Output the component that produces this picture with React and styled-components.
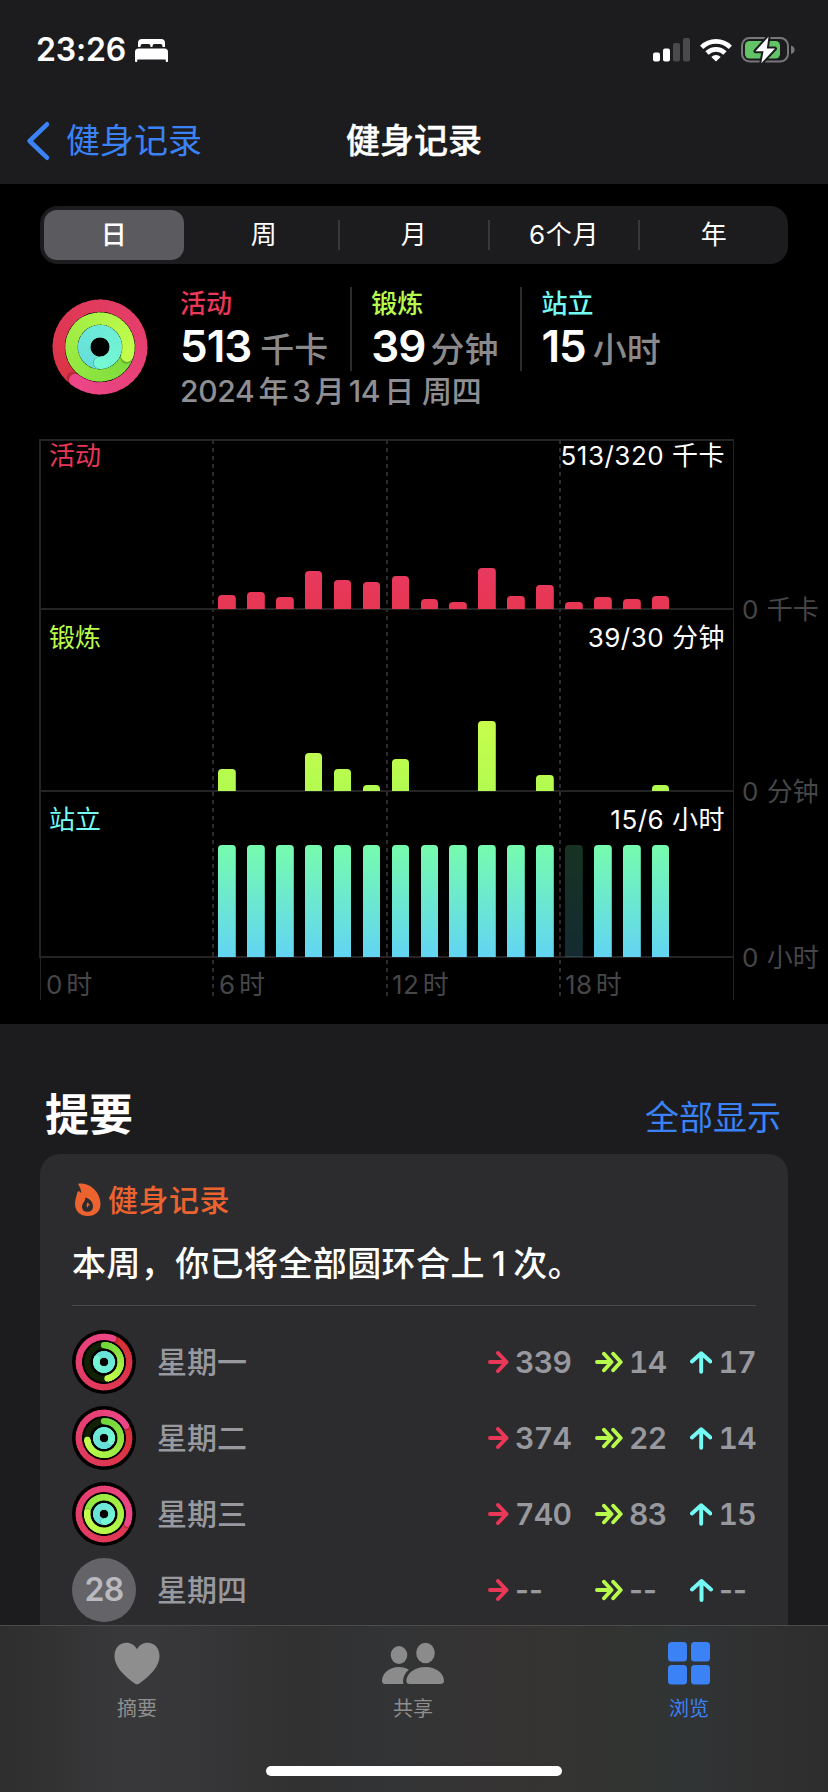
import React, { useState } from 'react';
import styled, { createGlobalStyle } from 'styled-components';

const GlobalStyle = createGlobalStyle`
  * { box-sizing: border-box; }
  body {
    margin: 0;
    background: #1c1c1e;
    color: #fff;
    font-family: Inter, "Noto Sans CJK SC", sans-serif;
    -webkit-font-smoothing: antialiased;
  }
`

const Screen = styled.div`
  width: 828px;
  height: 1792px;
  overflow: hidden;
  display: flex;
  flex-direction: column;
`
const Content = styled.main`
  flex: 1;
  min-height: 0;
  overflow: hidden;
`

/* ---------- header ---------- */
const StatusBar = styled.div`
  height: 100px;
  padding: 0 33px 0 36px;
  display: flex;
  align-items: center;
  justify-content: space-between;
`
const Clock = styled.div`
  display: flex;
  align-items: center;
  gap: 9px;
  font-size: 32px;
  line-height: 40px;
  font-weight: 600;
  letter-spacing: -0.2px;
`
const Indicators = styled.div`
  display: flex;
  align-items: center;
  gap: 9.5px;
`
const NavBar = styled.div`
  height: 84px;
  padding: 0 26px 2px;
  display: grid;
  grid-template-columns: 1fr auto 1fr;
  align-items: center;
  font-size: 34px;
  line-height: 40px;
`
const Back = styled.a`
  display: flex;
  align-items: center;
  gap: 15px;
  color: #3b82f7;
`
const Title = styled.span`
  font-weight: 500;
  -webkit-text-stroke: 0.4px #fff;
`

/* ---------- segmented control ---------- */
const Dark = styled.section`
  background: #000;
  height: 840px;
  padding-top: 22px;
`
const Segments = styled.div`
  display: flex;
  align-items: center;
  height: 58px;
  margin: 0 40px;
  padding: 4px;
  border-radius: 18px;
  background: #1c1c1e;
`
const Segment = styled.button`
  flex: 1;
  height: 50px;
  border: 0;
  border-radius: 13px;
  padding: 0;
  color: #fff;
  font-family: inherit;
  font-size: 26px;
  line-height: 50px;
  letter-spacing: 0.7px;
  font-weight: ${({ $on }) => ($on ? 500 : 400)};
  background: ${({ $on }) => ($on ? '#5b5a5f' : 'transparent')};
`
const Separator = styled.span`
  width: 2px;
  height: 30px;
  margin: 0 4px;
  background: ${({ $hidden }) => ($hidden ? 'transparent' : '#38383b')};
`

/* ---------- day summary ---------- */
const Summary = styled.div`
  display: flex;
  height: 175px;
  padding: 23px 0 0 52px;
`
const RingSlot = styled.div`
  width: 96px;
  padding-top: 12px;
  margin-right: 32px;
`
const Stats = styled.div`
  display: flex;
`
const Stat = styled.div`
  height: 84px;
  padding: 0 ${({ $last }) => ($last ? 0 : 22)}px 0 ${({ $first }) => ($first ? 0 : 19)}px;
  border-right: ${({ $last }) => ($last ? 0 : 2)}px solid #2c2c2e;
`
const StatName = styled.div`
  height: 34px;
  font-size: 26px;
  line-height: 34px;
  font-weight: 500;
  color: ${({ $color }) => $color};
`
const StatValue = styled.div`
  height: 50px;
  font-size: 44px;
  line-height: 50px;
  font-weight: 600;
  white-space: nowrap;
  letter-spacing: -1px;
`
const Unit = styled.span`
  margin-left: ${({ $gap }) => $gap}px;
  font-size: 34px;
  font-weight: 500;
  letter-spacing: 0;
  color: #8a8a8c;
`
const DateLine = styled.div`
  display: flex;
  gap: 8px;
  font-size: 30px;
  line-height: 40px;
  font-weight: 500;
  color: #8e8e93;
  white-space: nowrap;
  letter-spacing: -0.3px;
  word-spacing: -3.6px;
`

/* ---------- hourly chart ---------- */
const Chart = styled.div`
  display: flex;
  padding-left: 39px;
`
const Plot = styled.div`
  position: relative;
  width: 695px;
`
const Panels = styled.div`
  border: 2px solid #242426;
  border-width: 2px 1px 0 2px;
`
const Panel = styled.div`
  height: ${({ $height }) => $height}px;
  padding-top: ${({ $pad }) => $pad}px;
  border-bottom: 2px solid #242426;
  display: flex;
  flex-direction: column;
  justify-content: space-between;
`
const PanelHead = styled.div`
  display: flex;
  justify-content: space-between;
  padding: 0 8px;
  font-size: 26px;
  line-height: 30px;
  white-space: pre;
`
const PanelName = styled.span`
  color: ${({ $color }) => $color};
`
const PanelTotal = styled.span`
  letter-spacing: 0.5px;
`
const Bars = styled.div`
  display: grid;
  grid-template-columns: repeat(24, 1fr);
  align-items: end;
  justify-items: center;
  margin: 0 0 -1px -2px;
  position: relative;
`
const Bar = styled.span`
  width: 17.6px;
  border-radius: 4px 4px 0 0;
  background: ${({ $fill }) => $fill} bottom / 100% ${({ $span }) => $span}px;
  opacity: ${({ $dim }) => ($dim ? 0.2 : 1)};
`
// dashed hour lines, drawn over the three panels
const HourLines = styled.div`
  position: absolute;
  inset: 1px 0 0 0;
  display: grid;
  grid-template-columns: repeat(4, 1fr);
`
const HourLine = styled.span`
  width: 2px;
  margin-left: -1px;
  height: 558px;
  background: ${({ $hidden }) =>
    $hidden ? 'none' : 'repeating-linear-gradient(#2c2c2e 0 4px, transparent 4px 8px)'};
`
const Hours = styled.div`
  display: grid;
  grid-template-columns: repeat(4, 1fr);
  height: 42px;
  margin-left: 1px;
  border: 1px solid #242426;
  border-width: 0 1px;
  font-size: 26px;
  line-height: 54px;
  color: #464649;
`
const Hour = styled.span`
  padding-left: 5px;
  letter-spacing: 0.3px;
  word-spacing: -4px;
`
const Axis = styled.div`
  padding-left: 8px;
  font-size: 26px;
  line-height: 30px;
  color: #464649;
  white-space: nowrap;
`
const AxisLabel = styled.div`
  padding-top: ${({ $top }) => $top}px;
  word-spacing: 1px;
`

/* ---------- highlights ---------- */
const SectionHead = styled.div`
  height: 130px;
  padding: 69px 47px 0 45px;
  display: flex;
  justify-content: space-between;
`
const Heading = styled.h2`
  margin: 0;
  font-size: 44px;
  line-height: 44px;
  font-weight: 600;
`
const ShowAll = styled.a`
  font-size: 34px;
  line-height: 50px;
  color: #3b82f7;
`
const Card = styled.section`
  height: 600px;
  margin: 0 40px;
  padding: 26px 32px 0;
  border-radius: 20px;
  background: #2c2c2e;
`
const CardTag = styled.div`
  display: flex;
  align-items: center;
  gap: 6px;
  height: 40px;
  font-size: 30px;
  line-height: 40px;
  letter-spacing: 0.5px;
  font-weight: 500;
  color: #ec6330;
`
const CardText = styled.p`
  margin: 0 0 18px;
  padding: 23px 0 20px;
  font-size: 34px;
  line-height: 42px;
  letter-spacing: 0.4px;
  font-weight: 500;
  border-bottom: 1px solid #48484a;
  white-space: nowrap;
`
const Count = styled.span`
  margin: 0 7px;
`
const Day = styled.div`
  display: flex;
  align-items: center;
  height: 76px;
  font-size: 30px;
  line-height: 40px;
  font-weight: 500;
  color: #98989f;
`
const DayName = styled.span`
  flex: 1;
  margin-left: 21px;
`
const Badge = styled.span`
  width: 64px;
  height: 64px;
  border-radius: 50%;
  display: grid;
  place-items: center;
  background: #646368;
  color: #b9b9be;
  font-size: 32px;
  font-weight: 600;
  letter-spacing: -0.6px;
`
const Metric = styled.span`
  display: flex;
  align-items: center;
  gap: 6px;
  width: ${({ $width }) => $width}px;
  font-weight: 600;
  white-space: nowrap;
  letter-spacing: ${({ $empty }) => ($empty ? 0 : -0.6)}px;
  font-variant-numeric: ${({ $empty }) => ($empty ? 'normal' : 'tabular-nums')};
`

/* ---------- tab bar ---------- */
const TabBar = styled.nav`
  height: 167px;
  border-top: 1px solid #4b4b4c;
  background: linear-gradient(90deg, #2e2e2e 0, #38383a 115px, #38383a 160px, #313132 300px,
    #333435 400px, #363333 500px, #333431 590px, #313435 690px, #303030 770px, #2d2d2d 828px);
  display: flex;
  flex-direction: column;
  align-items: center;
`
const Tabs = styled.div`
  width: 828px;
  height: 140px;
  display: grid;
  grid-template-columns: repeat(3, 1fr);
`
const Tab = styled.a`
  display: flex;
  flex-direction: column;
  align-items: center;
  padding: 16px 2px 0 0;
  font-size: 20px;
  line-height: 26px;
  color: ${({ $on }) => ($on ? '#3b82f7' : '#8e8e8e')};
  svg { margin-bottom: 11px; }
`
const HomeIndicator = styled.div`
  width: 296px;
  height: 10px;
  border-radius: 5px;
  background: #fff;
`

/* ---------- icons ---------- */
const BedIcon = () => (
  <svg width="33" height="23" viewBox="0 0 33 23" fill="#fff">
    <path d="M3 8V4a4 4 0 0 1 4-4h19a4 4 0 0 1 4 4v4h-2.500V7a2 2 0 0 0-2-2H19.500a2 2 0 0 0-2 2v1h-2V7a2 2 0 0 0-2-2H7.500a2 2 0 0 0-2 2v1z" />
    <path d="M0 13a3.500 3.500 0 0 1 3.500-3.500h26A3.500 3.500 0 0 1 33 13v9a1 1 0 0 1-2.300 0v-1.500H2.300V22A1 1 0 0 1 0 22z" />
  </svg>
)
const SignalIcon = () => (
  <svg width="37" height="24" viewBox="0 0 37 24">
    <rect x="0" y="14.500" width="7" height="9" rx="2" fill="#fff" />
    <rect x="10" y="10.500" width="7" height="13" rx="2" fill="#fff" />
    <rect x="20" y="5" width="7" height="18.500" rx="2" fill="#4a4a4c" />
    <rect x="30" y="0" width="7" height="23.500" rx="2" fill="#4a4a4c" />
  </svg>
)
const WifiIcon = () => (
  <svg width="32" height="24" viewBox="0 0 32 24" fill="none" stroke="#fff" strokeWidth="4.600">
    <path d="M1.700 9.300a20.300 20.300 0 0 1 28.600 0" />
    <path d="M7 15a13 13 0 0 1 18 0" />
    <path d="M16 23.500l-4.700-4.600a6.800 6.800 0 0 1 9.400 0z" fill="#fff" stroke="none" />
  </svg>
)
const BatteryIcon = () => (
  <svg width="54" height="28" viewBox="0 0 54 28">
    <rect x="1" y="2" width="46" height="23.500" rx="7.500" fill="none" stroke="#77777a" strokeWidth="2" />
    <rect x="4" y="5" width="35" height="17.500" rx="4.500" fill="#62c466" />
    <path d="M50 9.500c2.600.800 3.600 2.200 3.600 4.300s-1 3.500-3.600 4.300z" fill="#77777a" />
    <path d="M27.500.800L14.500 15.200h8l-2.200 12L34 12.600h-8.200z" fill="#fff" stroke="#1c1c1e" strokeWidth="4" strokeLinejoin="round" paintOrder="stroke" />
  </svg>
)
const ChevronIcon = () => (
  <svg width="25" height="40" viewBox="0 0 25 40" fill="none" stroke="#3b82f7" strokeWidth="4.600" strokeLinecap="round" strokeLinejoin="round">
    <path d="M21 3.300L3.600 20 21 36.700" />
  </svg>
)
const FlameIcon = () => (
  <svg width="30" height="34" viewBox="0 0 30 34">
    <path
      fill="#ec6330"
      fillRule="evenodd"
      d="M6.400 1.700C6 .700 6.700.500 7.700.400 18 0 28.500 8.500 28.500 21c0 7.200-5 12-12.700 12C8 33 3 28 3 20.700c0-4.500 1.500-7.500 2.200-10.800.4-1.700 1.800-2 3-.8.400.4.700.9 1.100 1.200C9.200 7 8 4.200 6.400 1.700zM13.300 14.600c.4 4-3.300 5.500-3.300 9.200 0 3 2.200 5 5.400 5 3.300 0 5.600-2.100 5.600-5.400 0-4-2.900-7.800-7.700-8.800zM15.300 19.500c1.600.8 2.500 2 2.400 3.500-.5-.2-.9-.6-1.200-1 0 1-.4 1.800-1.300 2.500-.8-1.300-.8-3 .1-5z"
    />
  </svg>
)
const MoveArrow = () => (
  <svg width="21" height="24" viewBox="0 0 21 24" fill="none" stroke="#e93757" strokeWidth="4" strokeLinecap="round" strokeLinejoin="round">
    <path d="M2 12h16.500M10 3l8.500 9-8.500 9" />
  </svg>
)
const ExerciseArrow = () => (
  <svg width="28" height="24" viewBox="0 0 28 24" fill="none" stroke="#b9fb4c" strokeWidth="3.900" strokeLinecap="round" strokeLinejoin="round">
    <path d="M2 12h14M9 3.800l7.500 8.200L9 20.200M18.200 3.800l7.500 8.200-7.500 8.200" />
  </svg>
)
const StandArrow = () => (
  <svg width="23" height="24" viewBox="0 0 23 24" fill="none" stroke="#73fbf4" strokeWidth="4" strokeLinecap="round" strokeLinejoin="round">
    <path d="M11.500 22V3.500M2 11.500l9.500-8.500 9.500 8.500" />
  </svg>
)
const HeartIcon = () => (
  <svg width="46" height="43" viewBox="0 0 46 43" fill="#8e8e8e">
    <path d="M23 42.500c-1 0-2-.8-3.600-2C9.500 33 .5 24.600.500 14 .500 6 5.700.800 12.500.800c4.500 0 8.200 2.400 10.500 6.400C25.300 3.200 29 .800 33.500.800 40.300.800 45.500 6 45.500 14c0 10.600-9 19-18.900 26.500-1.600 1.200-2.600 2-3.600 2z" />
  </svg>
)
const PeopleIcon = () => (
  <svg width="62" height="43" viewBox="0 0 62 43" fill="#8b8b8b">
    <ellipse cx="17" cy="13" rx="8.300" ry="9" />
    <ellipse cx="43.500" cy="11" rx="9.300" ry="10.300" />
    <path d="M3 42C1 42 0 41 0 39c0-7.500 7-14 16.800-14 4 0 7.300 1 10 2.800C23 31 21 35.500 21 39.500c0 1 .2 1.800.6 2.500z" />
    <path d="M28 42c-2.500 0-3.700-1-3.700-3 0-6.800 7.400-14 19.200-14S62 32.200 62 39c0 2-1.200 3-3.700 3z" />
  </svg>
)
const GridIcon = () => (
  <svg width="42" height="43" viewBox="0 0 42 43" fill="#3b82f7">
    <rect x="0" y="0" width="19" height="19.500" rx="3.500" />
    <rect x="23" y="0" width="19" height="19.500" rx="3.500" />
    <rect x="0" y="23" width="19" height="19.500" rx="3.500" />
    <rect x="23" y="23" width="19" height="19.500" rx="3.500" />
  </svg>
)

/* ---------- activity rings ---------- */
const RING_COLORS = [
  { from: [214, 46, 48], to: [236, 70, 137], track: '#2b0a10' },
  { from: [112, 214, 58], to: [196, 254, 76], track: '#112204' },
  { from: [92, 205, 222], to: [117, 248, 212], track: '#06282a' },
]
const STEPS = 48

const mix = (a, b, t) => `rgb(${a.map((v, i) => Math.round(v + (b[i] - v) * t)).join(',')})`
const point = (c, r, deg) => {
  const rad = ((deg - 90) * Math.PI) / 180
  return [c + r * Math.cos(rad), c + r * Math.sin(rad)]
}

const Ring = ({ c, r, width, value, colors }) => {
  const end = value * 360
  const start = Math.max(0, end - 360)
  const sweep = end - start
  const first = start / end * 0.6
  // every slice runs under the next one so that no seam shows
  const overlap = (2 / (r - width / 2)) * (180 / Math.PI)
  const arcs = []
  for (let i = 0; i < STEPS; i++) {
    const a = start + (sweep * i) / STEPS
    const b = start + (sweep * (i + 1)) / STEPS
    const [x1, y1] = point(c, r, a)
    const [x2, y2] = point(c, r, Math.min(b + overlap, end))
    const t = first + (1 - first) * (i / (STEPS - 1))
    arcs.push(
      <path key={i} d={`M${x1} ${y1}A${r} ${r} 0 0 1 ${x2} ${y2}`} stroke={mix(colors.from, colors.to, t)} strokeWidth={width} />
    )
  }
  const [sx, sy] = point(c, r, start)
  const [ex, ey] = point(c, r, end)
  const [hx, hy] = point(c, r, end + 5)
  return (
    <g fill="none">
      {value < 1 && <circle cx={c} cy={c} r={r} stroke={colors.track} strokeWidth={width} />}
      {value < 1 && <circle cx={sx} cy={sy} r={width / 2} fill={mix(colors.from, colors.to, 0)} />}
      {arcs}
      {value > 1 && <circle cx={hx} cy={hy} r={width / 2 - 0.3} fill="rgba(0,0,0,0.18)" />}
      <circle cx={ex} cy={ey} r={width / 2} fill={mix(colors.from, colors.to, 1)} />
    </g>
  )
}

const Rings = ({ size, radii, width, values, backed }) => (
  <svg width={size} height={size} viewBox={`0 0 ${size} ${size}`}>
    {backed && <circle cx={size / 2} cy={size / 2} r={size / 2} fill="#000" />}
    {values.map((value, i) => (
      <Ring key={i} c={size / 2} r={radii[i]} width={width} value={value} colors={RING_COLORS[i]} />
    ))}
  </svg>
)

/* ---------- data ---------- */
const RED = '#e93757'
const GREEN = '#b9fb4c'
const CYAN = '#73fbf4'

const ranges = ['日', '周', '月', '6个月', '年']

const stats = [
  { name: '活动', color: RED, value: 513, unit: '千卡', gap: 9 },
  { name: '锻炼', color: GREEN, value: 39, unit: '分钟', gap: 5 },
  { name: '站立', color: CYAN, value: 15, unit: '小时', gap: 7 },
]

const panels = [
  {
    name: '活动', color: RED, total: '513/320 千卡', height: 169, pad: 0,
    fill: 'linear-gradient(#ea4078, #e63652)', span: 110,
    bars: { 6: 14, 7: 17, 8: 12, 9: 38, 10: 29, 11: 27, 12: 33, 13: 10, 14: 7, 15: 41, 16: 13, 17: 24, 18: 7, 19: 12, 20: 10, 21: 13 },
  },
  {
    name: '锻炼', color: GREEN, total: '39/30 分钟', height: 182, pad: 13,
    fill: 'linear-gradient(#cbfd4c, #b2fb50)', span: 80,
    bars: { 6: 22, 9: 38, 10: 22, 11: 6, 12: 32, 15: 70, 17: 16, 21: 6 },
  },
  {
    name: '站立', color: CYAN, total: '15/6 小时', height: 166, pad: 13,
    fill: 'linear-gradient(#76fcad, #62d4f3)', span: 112,
    bars: Object.fromEntries(Array.from({ length: 16 }, (_, i) => [i + 6, 112])),
    missed: 18,
  },
]

const hours = ['0 时', '6 时', '12 时', '18 时']

const axis = [
  { label: '0 千卡', top: 156 },
  { label: '0 分钟', top: 152 },
  { label: '0 小时', top: 136 },
]

const days = [
  { name: '星期一', rings: [1.06, 0.467, 2.833], move: 339, exercise: 14, stand: 17 },
  { name: '星期二', rings: [1.169, 0.733, 2.333], move: 374, exercise: 22, stand: 14 },
  { name: '星期三', rings: [2.312, 2.767, 2.5], move: 740, exercise: 83, stand: 15 },
  { name: '星期四', date: 28, move: '--', exercise: '--', stand: '--' },
]

const tabs = [
  { name: '摘要', Icon: HeartIcon },
  { name: '共享', Icon: PeopleIcon },
  { name: '浏览', Icon: GridIcon, on: true },
]

const HourBars = ({ bars, fill, span, missed }) => (
  <Bars>
    {Array.from({ length: 24 }, (_, h) => (
      <Bar key={h} $fill={fill} $span={span} $dim={h === missed} style={{ height: bars[h] || 0 }} />
    ))}
  </Bars>
)

const App = () => {
  const [range, setRange] = useState(0)
  return (
    <Screen>
      <GlobalStyle />
      <StatusBar>
        <Clock>23:26 <BedIcon /></Clock>
        <Indicators>
          <SignalIcon />
          <WifiIcon />
          <BatteryIcon />
        </Indicators>
      </StatusBar>
      <NavBar>
        <Back><ChevronIcon />健身记录</Back>
        <Title>健身记录</Title>
      </NavBar>

      <Content>
        <Dark>
          <Segments>
            {ranges.map((name, i) => (
              <React.Fragment key={name}>
                {i > 0 && <Separator $hidden={i === range || i === range + 1} />}
                <Segment $on={i === range} onClick={() => setRange(i)}>{name}</Segment>
              </React.Fragment>
            ))}
          </Segments>

          <Summary>
            <RingSlot>
              <Rings size={96} radii={[41.3, 28.5, 15.8]} width={12.2} values={[1.603, 1.3, 2.5]} />
            </RingSlot>
            <div>
              <Stats>
                {stats.map((s, i) => (
                  <Stat key={s.name} $first={i === 0} $last={i === stats.length - 1}>
                    <StatName $color={s.color}>{s.name}</StatName>
                    <StatValue>{s.value}<Unit $gap={s.gap}>{s.unit}</Unit></StatValue>
                  </Stat>
                ))}
              </Stats>
              <DateLine>
                <span>2024 年 3 月 14 日</span>
                <span>周四</span>
              </DateLine>
            </div>
          </Summary>

          <Chart>
            <Plot>
              <HourLines>
                {hours.map((h, i) => <HourLine key={h} $hidden={i === 0} />)}
              </HourLines>
              <Panels>
                {panels.map((p) => (
                  <Panel key={p.name} $height={p.height} $pad={p.pad}>
                    <PanelHead>
                      <PanelName $color={p.color}>{p.name}</PanelName>
                      <PanelTotal>{p.total}</PanelTotal>
                    </PanelHead>
                    <HourBars {...p} />
                  </Panel>
                ))}
              </Panels>
              <Hours>
                {hours.map((h) => <Hour key={h}>{h}</Hour>)}
              </Hours>
            </Plot>
            <Axis>
              {axis.map((a) => <AxisLabel key={a.label} $top={a.top}>{a.label}</AxisLabel>)}
            </Axis>
          </Chart>
        </Dark>

        <SectionHead>
          <Heading>提要</Heading>
          <ShowAll>全部显示</ShowAll>
        </SectionHead>
        <Card>
          <CardTag><FlameIcon />健身记录</CardTag>
          <CardText>本周，你已将全部圆环合上<Count>1</Count>次。</CardText>
          {days.map((d) => (
            <Day key={d.name}>
              {d.rings
                ? <Rings backed size={64} radii={[25.200, 16.800, 7.700]} width={6.200} values={d.rings} />
                : <Badge>{d.date}</Badge>}
              <DayName>{d.name}</DayName>
              <Metric $width={107} $empty={!d.rings}><MoveArrow />{d.move}</Metric>
              <Metric $width={95} $empty={!d.rings}><ExerciseArrow />{d.exercise}</Metric>
              <Metric $width={66} $empty={!d.rings}><StandArrow />{d.stand}</Metric>
            </Day>
          ))}
        </Card>
      </Content>

      <TabBar>
        <Tabs>
          {tabs.map(({ name, Icon, on }) => (
            <Tab key={name} $on={on}><Icon />{name}</Tab>
          ))}
        </Tabs>
        <HomeIndicator />
      </TabBar>
    </Screen>
  )
}

export default App
